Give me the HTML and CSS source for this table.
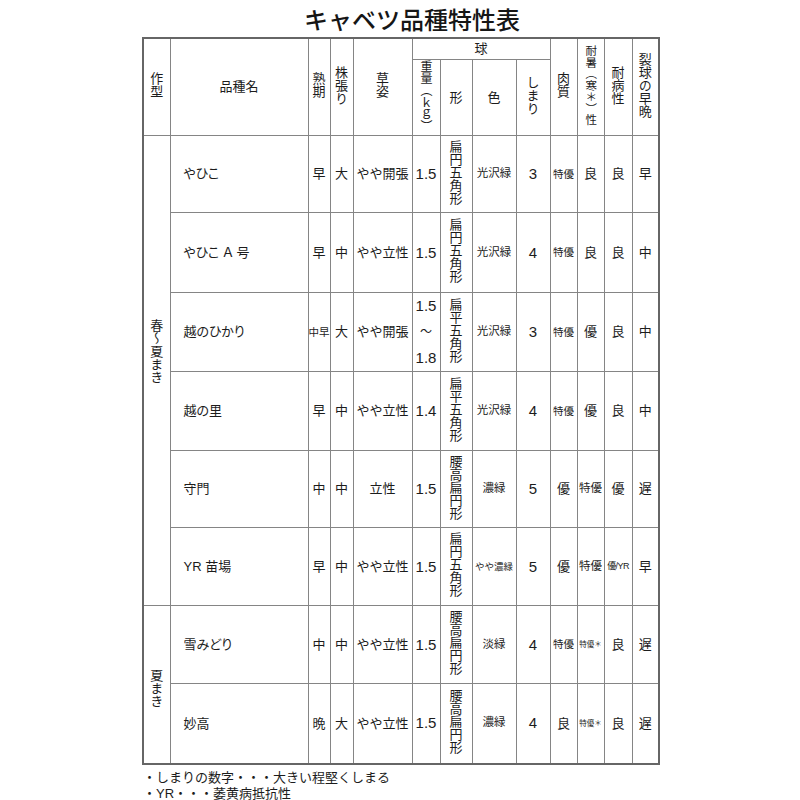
FILE: index.html
```html
<!DOCTYPE html>
<html lang="ja">
<head>
<meta charset="utf-8">
<title>キャベツ品種特性表</title>
<link rel="stylesheet" href="styles.css">
</head>
<body>
<div class="page">
  <h1 class="title">キャベツ品種特性表</h1>
  <table class="spec">
    <colgroup>
      <col class="c-type"><col class="c-name"><col class="c-jk"><col class="c-kb"><col class="c-ss">
      <col class="c-wt"><col class="c-fm"><col class="c-cl"><col class="c-sm">
      <col class="c-nk"><col class="c-ts"><col class="c-tb"><col class="c-rk">
    </colgroup>
    <thead>
      <tr class="h1">
        <th rowspan="2"><span class="v">作型</span></th>
        <th rowspan="2">品種名</th>
        <th rowspan="2"><span class="v">熟期</span></th>
        <th rowspan="2"><span class="v">株張り</span></th>
        <th rowspan="2"><span class="v">草姿</span></th>
        <th colspan="4">球</th>
        <th rowspan="2"><span class="v">肉質</span></th>
        <th rowspan="2"><span class="v vs">耐暑（寒＊）性</span></th>
        <th rowspan="2"><span class="v">耐病性</span></th>
        <th rowspan="2"><span class="v">裂球の早晩</span></th>
      </tr>
      <tr class="h2">
        <th><span class="v vw">重量（ｋｇ）</span></th>
        <th>形</th>
        <th>色</th>
        <th><span class="v">しまり</span></th>
      </tr>
    </thead>
    <tbody>
      <tr class="r77">
        <td rowspan="6" class="type type-spring"><span class="v">春～夏まき</span></td>
        <td class="name">やひこ</td>
        <td>早</td><td>大</td><td>やや開張</td><td class="num">1.5</td>
        <td><span class="v vf">扁円五角形</span></td>
        <td class="s11">光沢緑</td><td class="num2">3</td><td class="s10">特優</td><td>良</td><td>良</td><td>早</td>
      </tr>
      <tr class="r80">
        <td class="name">やひこ Ａ 号</td>
        <td>早</td><td>中</td><td>やや立性</td><td class="num">1.5</td>
        <td><span class="v vf">扁円五角形</span></td>
        <td class="s11">光沢緑</td><td class="num2">4</td><td class="s10">特優</td><td>良</td><td>良</td><td>中</td>
      </tr>
      <tr class="r79">
        <td class="name">越のひかり</td>
        <td class="s10">中早</td><td>大</td><td>やや開張</td>
        <td class="num range"><span class="ln">1.5</span><span class="ln tilde">～</span><span class="ln">1.8</span></td>
        <td><span class="v vf">扁平五角形</span></td>
        <td class="s11">光沢緑</td><td class="num2">3</td><td class="s10">特優</td><td>優</td><td>良</td><td>中</td>
      </tr>
      <tr class="r79">
        <td class="name">越の里</td>
        <td>早</td><td>中</td><td>やや立性</td><td class="num">1.4</td>
        <td><span class="v vf">扁平五角形</span></td>
        <td class="s11">光沢緑</td><td class="num2">4</td><td class="s10">特優</td><td>優</td><td>良</td><td>中</td>
      </tr>
      <tr class="r77">
        <td class="name">守門</td>
        <td>中</td><td>中</td><td>立性</td><td class="num">1.5</td>
        <td><span class="v vf">腰高扁円形</span></td>
        <td class="s11">濃緑</td><td class="num2">5</td><td>優</td><td class="s11">特優</td><td>優</td><td>遅</td>
      </tr>
      <tr class="r78">
        <td class="name">YR 苗場</td>
        <td>早</td><td>中</td><td>やや立性</td><td class="num">1.5</td>
        <td><span class="v vf">扁円五角形</span></td>
        <td class="s9">やや濃緑</td><td class="num2">5</td><td>優</td><td class="s11">特優</td><td class="s8">優/YR</td><td>早</td>
      </tr>
      <tr class="r78">
        <td rowspan="2" class="type type-summer"><span class="v">夏まき</span></td>
        <td class="name">雪みどり</td>
        <td>中</td><td>中</td><td>やや立性</td><td class="num">1.5</td>
        <td><span class="v vf">腰高扁円形</span></td>
        <td class="s11">淡緑</td><td class="num2">4</td><td class="s10">特優</td><td class="s7">特優＊</td><td>良</td><td>遅</td>
      </tr>
      <tr class="r80">
        <td class="name">妙高</td>
        <td>晩</td><td>大</td><td>やや立性</td><td class="num">1.5</td>
        <td><span class="v vf">腰高扁円形</span></td>
        <td class="s11">濃緑</td><td class="num2">4</td><td>良</td><td class="s7">特優＊</td><td>良</td><td>遅</td>
      </tr>
    </tbody>
  </table>
  <div class="notes">
    <p class="note">・しまりの数字・・・大きい程堅くしまる</p>
    <p class="note">・YR・・・萎黄病抵抗性</p>
  </div>
</div>
</body>
</html>
```

FILE: styles.css
```css
html, body {
  margin: 0;
  padding: 0;
  background: #ffffff;
}

body {
  font-family: "Liberation Sans", "Noto Sans CJK JP", sans-serif;
  color: #1c1c1c;
}

.page {
  width: 800px;
  height: 800px;
  overflow: hidden;
}

.title {
  margin: 0;
  height: 37px;
  line-height: 37px;
  padding-left: 24px;
  text-align: center;
  font-family: "Noto Sans CJK JP", sans-serif;
  font-size: 24px;
  font-weight: 500;
  color: #161616;
}

.spec {
  border-collapse: collapse;
  table-layout: fixed;
  width: 516px;
  margin: 0 0 0 142px;
  border: 2px solid #666666;
}

.c-type { width: 27px; }
.c-name { width: 138px; }
.c-jk { width: 22px; }
.c-kb { width: 23px; }
.c-ss { width: 59px; }
.c-wt { width: 28px; }
.c-fm { width: 32px; }
.c-cl { width: 44px; }
.c-sm { width: 34px; }
.c-nk { width: 27px; }
.c-ts { width: 27px; }
.c-tb { width: 28px; }
.c-rk { width: 27px; }

.spec th,
.spec td {
  border: 1px solid #858585;
  padding: 0;
  text-align: center;
  vertical-align: middle;
  font-weight: normal;
  font-size: 13px;
  line-height: 1.2;
  white-space: nowrap;
  overflow: hidden;
}

.h1 { height: 21px; }
.h2 { height: 75px; }
.r77 { height: 77px; }
.r78 { height: 78px; }
.r79 { height: 79px; }
.r80 { height: 80px; }

.v {
  display: inline-block;
  writing-mode: vertical-rl;
  line-height: 1;
  font-family: "Noto Sans CJK JP", sans-serif;
}

.vs { font-size: 11.5px; }
.vw { font-size: 12px; }
.vf { font-size: 13px; }

.name {
  text-align: left !important;
  padding-left: 13px !important;
  font-feature-settings: "palt";
}

.type .v { font-size: 13px; }
.type-spring { padding-bottom: 34px !important; }
.type-summer { padding-top: 12px !important; }

.num {
  font-size: 15px !important;
  letter-spacing: 0;
}

.num2 { font-size: 15px !important; }

.range .ln {
  display: block;
  line-height: 26px;
}

.range .tilde {
  font-size: 12px;
}

.s11 { font-size: 11.5px !important; }
.s10 { font-size: 10.5px !important; }
.s9 { font-size: 9.5px !important; }
.s8 { font-size: 9px !important; letter-spacing: -0.6px; }
.s7 { font-size: 7.5px !important; }

.notes {
  margin-top: 5px;
  padding-left: 143px;
}

.note {
  margin: 0;
  font-size: 13px;
  line-height: 16px;
}
```
